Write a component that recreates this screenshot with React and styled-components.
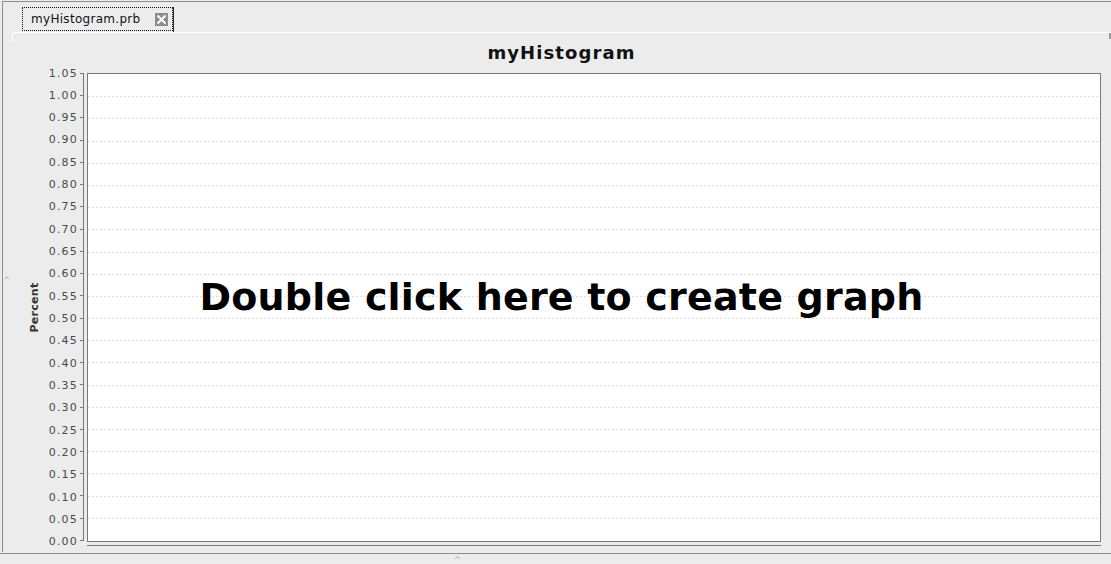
import React from 'react';
import styled, { createGlobalStyle } from 'styled-components';

const GlobalStyle = createGlobalStyle`
  html, body {
    margin: 0;
    padding: 0;
    background: #ececec;
  }
  body {
    font-family: "DejaVu Sans", "Liberation Sans", sans-serif;
  }
`;

const Window = styled.div`
  width: 1111px;
  height: 564px;
  background: #ececec;
  padding-top: 1px;
  box-sizing: border-box;
  display: flex;
  flex-direction: column;
  overflow: hidden;
`;

const Frame = styled.div`
  margin-left: 2px;
  height: 551px;
  box-sizing: border-box;
  border-top: 1px solid #8e8e8e;
  border-left: 1px solid #8e8e8e;
  display: flex;
  flex-direction: column;
  position: relative;
`;

const TabStrip = styled.div`
  height: 30px;
  box-sizing: border-box;
  padding: 5px 0 0 19px;
  display: flex;
`;

const Tab = styled.div`
  height: 25px;
  box-sizing: border-box;
  border-right: 1px solid #2a2a2a;
  display: flex;
`;

const TabFocus = styled.div`
  height: 24px;
  width: 151px;
  box-sizing: border-box;
  border: 1px dotted #111;
  display: flex;
  align-items: center;
  padding: 0 0 0 8px;
  gap: 14px;
  font-size: 12px;
  letter-spacing: 0.3px;
  color: #111;
`;

const CloseBox = styled.span`
  width: 13px;
  height: 13px;
  background: #8c8c8c;
  display: inline-flex;
  align-items: center;
  justify-content: center;
`;

const Panel = styled.div`
  flex: 1;
  margin-left: 9px;
  border-top: 1px solid #ffffff;
  display: flex;
  flex-direction: column;
  position: relative;
  &::before {
    content: '';
    position: absolute;
    left: 0;
    top: 0;
    width: 1px;
    height: 8px;
    background: #ffffff;
  }
  &::after {
    content: '';
    position: absolute;
    right: 0;
    top: 0;
    width: 2px;
    height: 6px;
    background: #9a9a9a;
  }
`;

const Title = styled.div`
  padding: 9px 0 9px;
  line-height: 22px;
  text-align: center;
  font-size: 18px;
  letter-spacing: 1.1px;
  font-weight: bold;
  color: #111;
`;

const ChartRow = styled.div`
  display: flex;
  padding-right: 10px;
`;

const AxisTitleCol = styled.div`
  width: 36px;
  padding-left: 8px;
  box-sizing: border-box;
  display: flex;
  align-items: center;
  justify-content: center;
  height: 469px;
`;

const AxisTitle = styled.span`
  transform: rotate(-90deg);
  white-space: nowrap;
  font-size: 11px;
  font-weight: bold;
  letter-spacing: 0.3px;
  color: #333;
`;

const TickLabels = styled.div`
  width: 30px;
  height: 469px;
  display: flex;
  flex-direction: column;
  justify-content: space-between;
`;

const TickLabel = styled.div`
  height: 0;
  display: flex;
  align-items: center;
  justify-content: flex-end;
  font-size: 11px;
  color: #4a4a4a;
  letter-spacing: 1.2px;
`;

const AxisLine = styled.div`
  width: 6px;
  height: 468px;
  box-sizing: border-box;
  border-right: 1px solid #777;
  display: flex;
  flex-direction: column;
  justify-content: space-between;
`;

const Tick = styled.div`
  height: 1px;
  width: 3px;
  margin-left: 2px;
  background: #777;
`;

const PlotCol = styled.div`
  flex: 1;
  margin-left: 3px;
  display: flex;
  flex-direction: column;
`;

const PlotBox = styled.div`
  height: 469px;
  box-sizing: border-box;
  border: 1px solid #7a7a7a;
  background: #ffffff;
  display: flex;
  flex-direction: column;
  justify-content: space-between;
`;

const GridLine = styled.div`
  height: 1px;
  background-image: linear-gradient(to right, #dddddd 50%, transparent 50%);
  background-size: 4px 1px;
  visibility: ${p => (p.$hidden ? 'hidden' : 'visible')};
`;

const XAxis = styled.div`
  margin-top: 3px;
  height: 1px;
  background: #7a7a7a;
`;

const Prompt = styled.div`
  position: absolute;
  left: 0;
  right: 0;
  top: 242px;
  text-align: center;
  font-size: 38px;
  font-weight: bold;
  color: #000;
  letter-spacing: 0.2px;
  pointer-events: none;
`;

const BottomBar = styled.div`
  margin-top: 1px;
  flex: 1;
  border-top: 1px solid #8e8e8e;
  display: flex;
  padding-left: 455px;
  padding-top: 2px;
`;

const Grip = styled.svg`
  display: block;
`;

const LeftGrip = styled.svg`
  position: absolute;
  left: 2px;
  top: 274px;
`;

const ticks = Array.from({ length: 22 }, (_, i) => ((21 - i) * 0.05).toFixed(2));

export default function App() {
  return (
    <Window>
      <GlobalStyle />
      <Frame>
        <LeftGrip width="4" height="4" viewBox="0 0 4 4">
          <path d="M0 3 L2 1 L4 3" stroke="#aaa" fill="none" strokeWidth="1" />
        </LeftGrip>
        <TabStrip>
          <Tab>
            <TabFocus>
              <span>myHistogram.prb</span>
              <CloseBox>
                <svg width="11" height="11" viewBox="0 0 11 11">
                  <path d="M1.5 1.5 L9.5 9.5 M9.5 1.5 L1.5 9.5" stroke="#fff" strokeWidth="2" />
                </svg>
              </CloseBox>
            </TabFocus>
          </Tab>
        </TabStrip>
        <Panel>
          <Title>myHistogram</Title>
          <ChartRow>
            <AxisTitleCol>
              <AxisTitle>Percent</AxisTitle>
            </AxisTitleCol>
            <TickLabels>
              {ticks.map(t => (
                <TickLabel key={t}>{t}</TickLabel>
              ))}
            </TickLabels>
            <AxisLine>
              {ticks.map(t => (
                <Tick key={t} />
              ))}
            </AxisLine>
            <PlotCol>
              <PlotBox>
                {ticks.map((t, i) => (
                  <GridLine key={t} $hidden={i === 0 || i === ticks.length - 1} />
                ))}
              </PlotBox>
              <XAxis />
            </PlotCol>
          </ChartRow>
          <Prompt>Double click here to create graph</Prompt>
        </Panel>
      </Frame>
      <BottomBar>
        <Grip width="5" height="4" viewBox="0 0 5 4">
          <path d="M0 3 L2.5 0.5 L5 3" stroke="#aaa" fill="none" strokeWidth="1" />
        </Grip>
      </BottomBar>
    </Window>
  );
}
